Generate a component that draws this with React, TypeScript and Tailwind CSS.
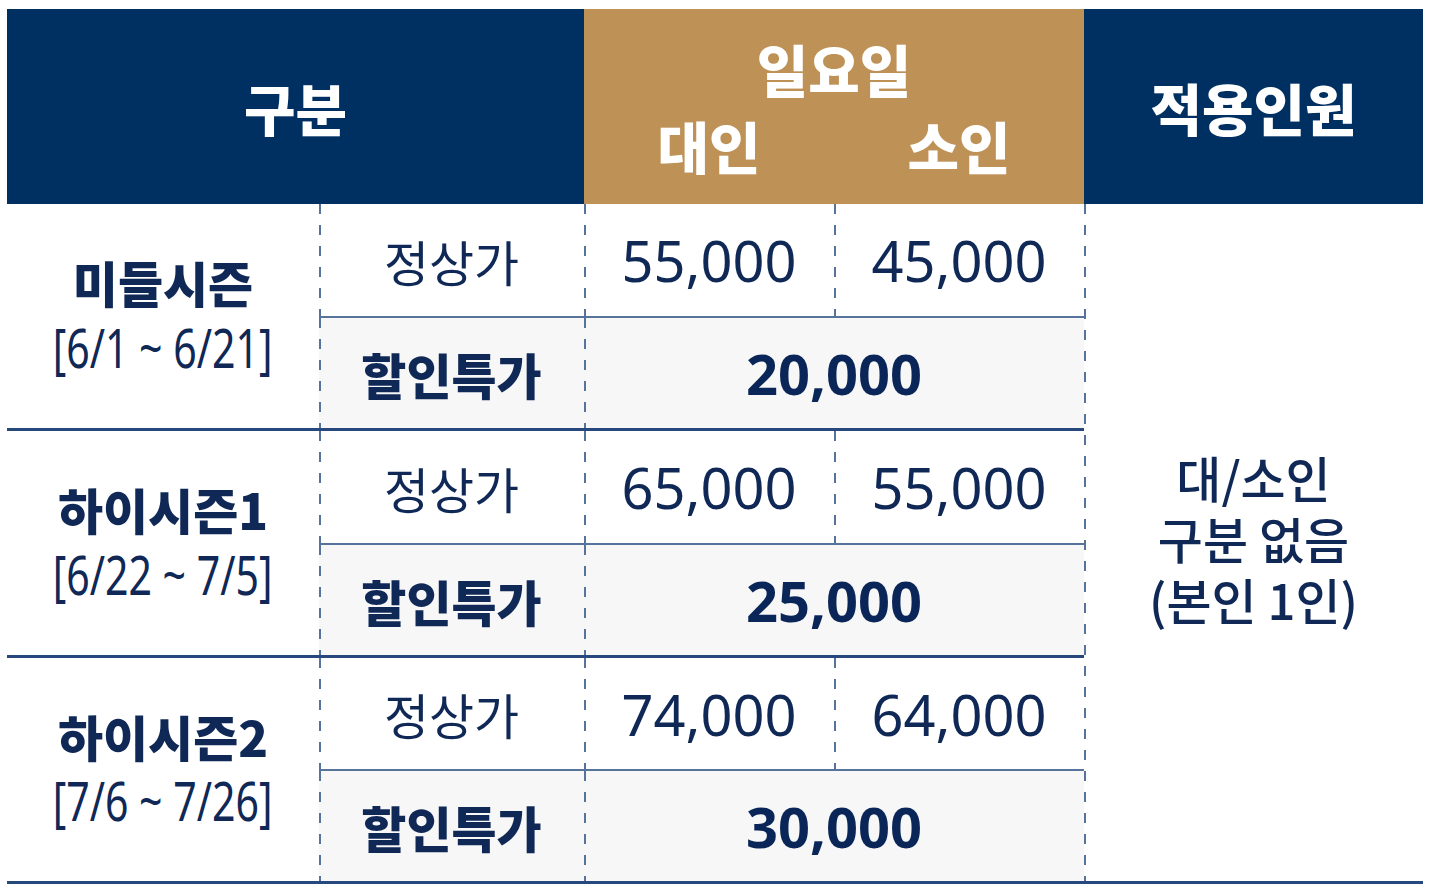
import React from "react";

const KR = "font-['Noto_Sans_CJK_KR','Noto_Sans',sans-serif]";
const NUM = "font-['Noto_Sans','Noto_Sans_CJK_KR',sans-serif]";
const DASH =
  "[background-image:repeating-linear-gradient(to_bottom,#56739c_0px,#56739c_10px,transparent_10px,transparent_21px)] [background-size:2px_100%] [background-position:left_top] bg-no-repeat";

type Season = { name: string; range: string; adult: string; child: string; sale: string };

const seasons: Season[] = [
  { name: "미들시즌", range: "[6/1 ~ 6/21]", adult: "55,000", child: "45,000", sale: "20,000" },
  { name: "하이시즌1", range: "[6/22 ~ 7/5]", adult: "65,000", child: "55,000", sale: "25,000" },
  { name: "하이시즌2", range: "[7/6 ~ 7/26]", adult: "74,000", child: "64,000", sale: "30,000" },
];

export default function App() {
  return (
    <div className="min-h-screen bg-white pt-[9px] pl-[7px]">
      <div className="grid grid-cols-[312px_265px_250px_250px_339px] grid-rows-[195px_114px_113px_114px_113px_113px_113px] text-[#0f2856]">
        {/* Header */}
        <div className={`col-span-2 bg-[#002f62] flex items-center justify-center text-white text-[56px] font-black leading-none ${KR}`}>
          구분
        </div>
        <div className={`col-span-2 bg-[#be9156] flex flex-col justify-center text-white text-[56px] font-black ${KR}`}>
          <div className="h-[77px] flex items-center justify-center leading-none">일요일</div>
          <div className="grid grid-cols-2 h-[77px]">
            <div className="flex items-center justify-center leading-none">대인</div>
            <div className="flex items-center justify-center leading-none">소인</div>
          </div>
        </div>
        <div className={`bg-[#002f62] flex items-center justify-center text-white text-[56px] font-black leading-none ${KR}`}>
          적용인원
        </div>

        {seasons.map((s, i) => (
          <React.Fragment key={s.name}>
            <div className="row-span-2 border-b-[3px] border-[#26487c] flex flex-col items-center justify-center pb-[4px]">
              <div className={`h-[65px] flex items-center text-[49px] font-extrabold leading-none ${KR}`}>{s.name}</div>
              <div className={`h-[65px] flex items-center text-[54px] leading-none ${NUM}`}>
                <span className="inline-block scale-x-[0.76] whitespace-nowrap">{s.range}</span>
              </div>
            </div>
            <div className={`${DASH} border-b-2 border-[#56739c] flex items-center justify-center text-[49px] leading-none ${KR}`}>
              정상가
            </div>
            <div className={`${DASH} border-b-2 border-[#56739c] flex items-center justify-center text-[56px] leading-none ${NUM}`}>
              {s.adult}
            </div>
            <div className={`${DASH} border-b-2 border-[#56739c] flex items-center justify-center text-[56px] leading-none ${NUM}`}>
              {s.child}
            </div>
            {i === 0 && (
              <div className={`${DASH} row-span-6 border-b-[3px] border-[#26487c] flex flex-col items-center justify-center pb-[10px] text-[49px] font-medium ${KR}`}>
                <div className="h-[61px] flex items-center leading-none">대/소인</div>
                <div className="h-[61px] flex items-center leading-none">구분 없음</div>
                <div className="h-[61px] flex items-center leading-none">(본인 1인)</div>
              </div>
            )}
            <div className={`${DASH} bg-[#f7f7f7] border-b-[3px] border-[#26487c] flex items-center justify-center text-[49px] font-black leading-none ${KR}`}>
              할인특가
            </div>
            <div className={`${DASH} col-span-2 bg-[#f7f7f7] border-b-[3px] border-[#26487c] flex items-center justify-center text-[56px] font-bold leading-none text-[#0a2557] ${NUM}`}>
              {s.sale}
            </div>
          </React.Fragment>
        ))}
      </div>
    </div>
  );
}
